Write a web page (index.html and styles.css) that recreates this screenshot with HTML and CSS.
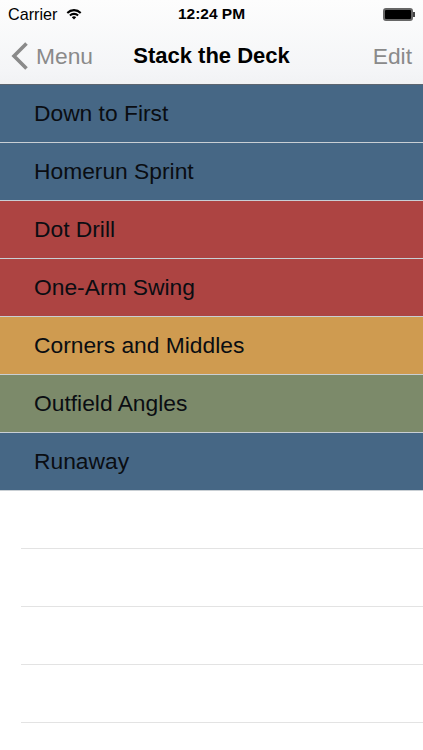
FILE: index.html
```html
<!DOCTYPE html>
<html lang="en">
<head>
  <meta charset="UTF-8" />
  <title>Stack the Deck</title>
  <link rel="stylesheet" href="styles.css">
</head>
<body>
  <header class="topbar">
    <div class="status">
      <div class="status-left">
        <span class="carrier">Carrier</span>
        <svg class="wifi" viewBox="0 0 16 12" width="16" height="12">
          <path d="M0.6 4.2 A10.4 10.4 0 0 1 15.4 4.2 L14 5.7 A8.4 8.4 0 0 0 2 5.7 Z" fill="#000"/>
          <path d="M3.2 6.8 A6.8 6.8 0 0 1 12.8 6.8 L11.4 8.3 A4.8 4.8 0 0 0 4.6 8.3 Z" fill="#000"/>
          <path d="M5.8 9.2 A3.2 3.2 0 0 1 10.2 9.2 L8 11.6 Z" fill="#000"/>
        </svg>
      </div>
      <div class="clock">12:24 PM</div>
      <div class="status-right">
        <div class="battery"></div>
        <div class="battery-tip"></div>
      </div>
    </div>
    <nav class="nav">
      <a class="nav-back">
        <svg class="chevron" viewBox="0 0 18 28" width="18" height="28">
          <path d="M15.5 1.5 L3 14 L15.5 26.5" fill="none" stroke="#8a8a8a" stroke-width="3.6"/>
        </svg>
        <span>Menu</span>
      </a>
      <div class="nav-title">Stack the Deck</div>
      <a class="nav-edit">Edit</a>
    </nav>
  </header>

  <ul class="drills">
    <li class="drill blue">Down to First</li>
    <li class="drill blue">Homerun Sprint</li>
    <li class="drill red">Dot Drill</li>
    <li class="drill red">One-Arm Swing</li>
    <li class="drill orange">Corners and Middles</li>
    <li class="drill green">Outfield Angles</li>
    <li class="drill blue">Runaway</li>
    <li class="drill"></li>
    <li class="drill"></li>
    <li class="drill"></li>
    <li class="drill"></li>
  </ul>
</body>
</html>
```

FILE: styles.css
```css
body {
  margin: 0;
  height: 750px;
  overflow: hidden;
  background: #fff;
  color: #000;
  font-family: "Liberation Sans", Arial, sans-serif;
}

.topbar {
  height: 85px;
  box-sizing: border-box;
  background: linear-gradient(#fdfdfd, #f4f5f7 85%, #f1f2f4);
  border-bottom: 1px solid #5d6670;
}

.status {
  height: 28px;
  padding: 0 8px;
  display: flex;
  align-items: center;
  justify-content: space-between;
  font-size: 15.5px;
}

.status-left {
  width: 120px;
  display: flex;
  align-items: center;
  gap: 9px;
}

.carrier {
  font-size: 16.2px;
}

.clock {
  font-weight: bold;
}

.status-right {
  width: 120px;
  display: flex;
  justify-content: flex-end;
  align-items: center;
}

.battery {
  width: 26px;
  height: 9px;
  background: #000;
  border: 2px solid #666;
  border-radius: 3px;
}

.battery-tip {
  width: 2px;
  height: 5px;
  background: #444;
}

.nav {
  height: 56px;
  padding: 0 11px;
  display: flex;
  align-items: center;
  justify-content: space-between;
  font-size: 22.8px;
  color: #8a8a8a;
}

.nav-back {
  width: 120px;
  display: flex;
  align-items: center;
  gap: 7px;
}

.nav-title {
  color: #000;
  font-size: 22px;
  font-weight: bold;
  white-space: nowrap;
}

.nav-edit {
  width: 120px;
  text-align: right;
}

.drills {
  margin: 0;
  padding: 0;
  list-style: none;
}

.drill {
  height: 58px;
  box-sizing: border-box;
  margin-left: 21px;
  padding-left: 13px;
  line-height: 56px;
  font-size: 22.8px;
  color: #0a0d12;
  border-bottom: 1px solid #e3e3e3;
}

.blue, .red, .orange, .green {
  margin-left: 0;
  padding-left: 34px;
  border-bottom-color: #c9cfd4;
}

.blue { background: #466785; }
.red { background: #ad4442; }
.orange { background: #cf9b50; }
.green { background: #7c8a6a; }
```
